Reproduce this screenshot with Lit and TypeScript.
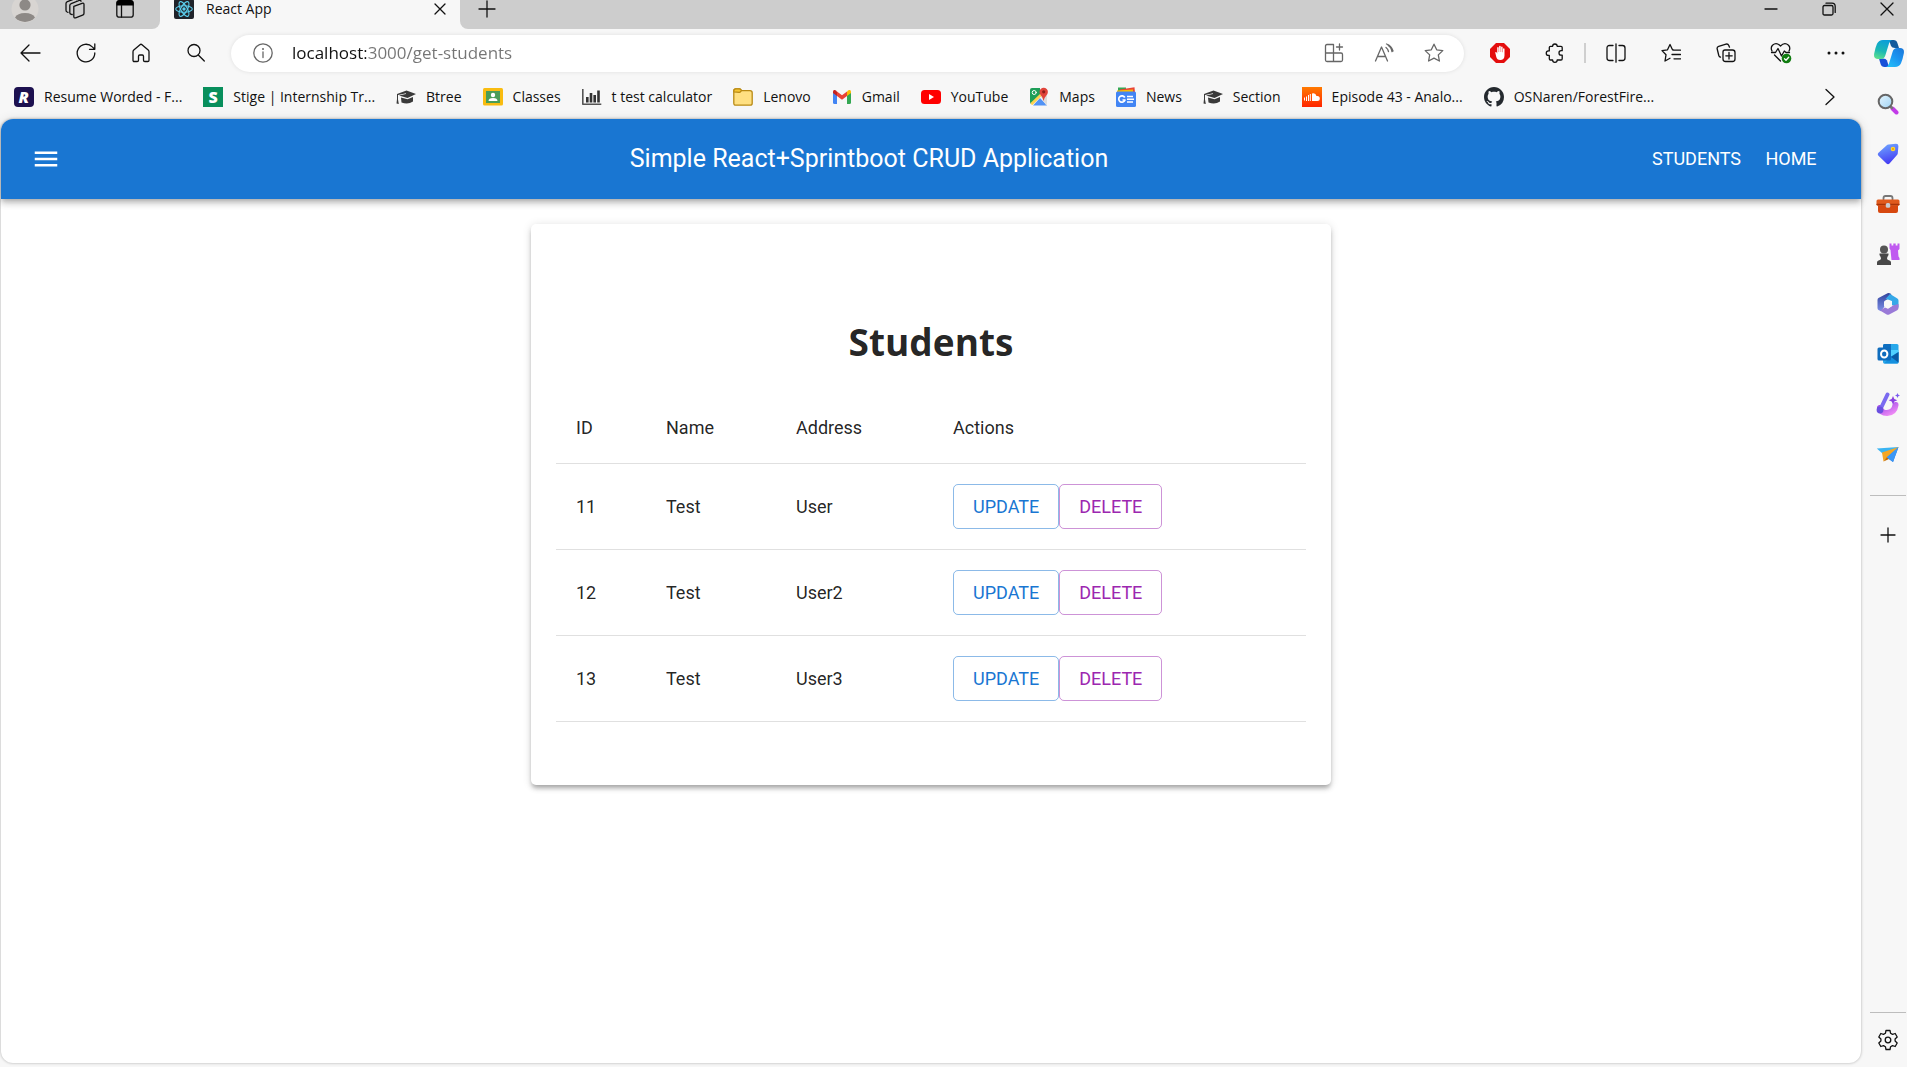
import { LitElement, html, svg, css, type TemplateResult } from "lit";
import { customElement, state } from "lit/decorators.js";

const icon = (w: number, h: number, body: TemplateResult) => html`<svg
  width=${w} height=${h} viewBox="0 0 ${w} ${h}" aria-hidden="true"
  fill="none" stroke-width="1.3" stroke-linecap="round" stroke-linejoin="round">${body}</svg>`;

const line = (d: string, w = 20, h = 20) => icon(w, h, svg`<path stroke="currentColor" d=${d}/>`);

/* Window chrome */
const avatar = icon(28, 28, svg`
  <circle cx="14" cy="14" r="13.5" fill="#d8d5d2"/>
  <circle cx="14" cy="10" r="5.6" fill="#8d8986"/>
  <path d="M4 22.500a10.500 6.500 0 0 1 20 0a13.500 13.500 0 0 1-20 0z" fill="#8d8986"/>`);
const workspaces = line("M9.800 8.300 18 5.300q2-.7 2 1.300v8.600q0 1.500-1.400 2l-7 2.600q-1.800.6-1.800-1.200zM8.200 16.500l-1-.2q-1.400-.4-1.400-1.600V7.600q0-1.500 1.400-2l8-3.100q1.500-.5 1.900.7M4 14.300l-.8-.3Q2 13.500 2 12.300V5.600q0-1.500 1.400-2L10.500.9q1.500-.5 2 .7", 22, 22);
const tabActions = icon(20, 20, svg`
  <rect x="1.800" y="1.800" width="16.400" height="16.400" rx="2.500" stroke="#111"/>
  <path d="M1.500 6.500V4a3 3 0 0 1 3-3h11a3 3 0 0 1 3 3v2.500z" fill="#000"/>
  <path d="M6.500 6.500V18" stroke="#111"/>`);
const reactLogo = icon(20, 20, svg`
  <rect width="20" height="20" rx="2" fill="#20232a"/>
  <g stroke="#5ccfee" stroke-width="1.100">
    <ellipse cx="10" cy="10" rx="8.300" ry="3.200"/>
    <ellipse cx="10" cy="10" rx="8.300" ry="3.200" transform="rotate(60 10 10)"/>
    <ellipse cx="10" cy="10" rx="8.300" ry="3.200" transform="rotate(120 10 10)"/>
  </g><circle cx="10" cy="10" r="1.700" fill="#5ccfee"/>`);
const closeTab = line("M1 1l10 10M11 1L1 11", 12, 12);
const plus = line("M9 1v16M1 9h16", 18, 18);
const minimize = line("M1 7h12", 14, 14);
const restore = line("M3 3.500h6.500q1.500 0 1.500 1.500v6.500q0 1.500-1.500 1.500H2.500Q1 13 1 11.500V5q0-1.500 1.500-1.500M4 1.200h6q3.200 0 3.200 3.200v6", 14, 14);
const closeWindow = line("M1 1l12 12M13 1L1 13", 14, 14);

/* Toolbar */
const back = line("M20 10H1M9 2L1 10l8 8", 21, 20);
const reload = line("M18.800 10A8.800 8.800 0 1 1 16.300 3.900L18.500 6M18.800 1v5.300h-5.300", 20, 20);
const home = line("M2 8.800q0-1 .8-1.700L9 1.700q1-.9 2 0l6.200 5.400q.8.7.8 1.700v8.400q0 1.300-1.300 1.300h-2.900q-1.300 0-1.300-1.300v-4q0-1.200-1.200-1.200H8.700q-1.200 0-1.200 1.200v4q0 1.300-1.300 1.300H3.300Q2 18.500 2 17.200z");
const search = line("M14 7.500a6 6 0 1 1-12 0a6 6 0 0 1 12 0M12.300 12l6 6");
const info = icon(20, 20, svg`<circle cx="10" cy="10" r="9.200" stroke="#666"/><path d="M10 9v5.500" stroke="#666"/><circle cx="10" cy="6" r="1" fill="#666"/>`);
const appAdd = line("M9.500 1.500H3q-1.500 0-1.500 1.500v14q0 1.500 1.500 1.500h14q1.500 0 1.500-1.500v-5.500q0-1.500-1.500-1.500H1.500M9.500 1.500v17M15.500 1v6M12.500 4h6");
const readAloud = line("M1.500 18L7.500 4l6 14M3.500 13.500h8M12 4.500q2 1.500 2.500 4M14 2.200q3.500 2.200 4 6.500M12.500 1q5 1.500 6.500 7");
const star = line("M10 1.200l2.700 5.600 6.100.8-4.500 4.300 1.100 6.100L10 15.100 4.600 18l1.100-6.100L1.200 7.600l6.100-.8z");
const adblock = icon(20, 20, svg`
  <path d="M6 0h8l6 6v8l-6 6H6l-6-6V6z" fill="#e40d0d"/>
  <path d="M5.200 9.500c0-.7 1.300-.7 1.500 0l.5 1.200V4.800c0-1 1.500-1 1.500 0V9h.4V3.500c0-1 1.600-1 1.600 0V9h.4V4.200c0-1 1.500-1 1.500 0v5h.4V6c0-1 1.500-1 1.500 0v6.500c0 3-1.700 4.500-4.200 4.500-2.600 0-3.400-1.300-4-3z" fill="#fff"/>`);
const puzzle = line("M5.500 3.300H7.600a2.300 2.300 0 0 1 4.600 0H16q1.200 0 1.200 1.200v3.200h-1a2.200 2.200 0 0 0 0 4.400h1v3.700q0 1.200-1.200 1.200h-3.800a2.300 2.300 0 0 1-4.600 0H5.500q-1.200 0-1.200-1.200v-3.400h-.8a2.200 2.200 0 0 1 0-4.500h.8V4.500q0-1.200 1.200-1.200z");
const split = line("M10 .8v18.400M7 2.500H3.500Q1 2.500 1 5v10q0 2.500 2.500 2.500H7M13 2.500h3.500Q19 2.500 19 5v10q0 2.500-2.500 2.500H13");
const favorites = line("M12.500 7l-1-.2L9 1.500 6.500 6.800 1 7.600l4 4.200-1 6.200 5-2.800M12 7.200h7.500M11 11.500h8.500M13 15.800h6.500");
const collections = line("M9 7h7.500q2.500 0 2.500 2.500V16q0 2.500-2.500 2.500H9.500Q7 18.500 7 16V9q0-2 2-2zM13 9.500v6.500M9.800 12.800h6.400M4.500 14.200q-1.300-.3-1.700-1.700L1.200 6Q.7 4 2.700 3.300L10 1.100q2-.5 2.800 1.300l.7 1.800");
const health = icon(22, 22, svg`
  <path stroke="#111" d="M2 9Q.3 5.500 2.500 3.200 6.500-.2 10.500 4 14.500-.2 18.500 3.200 20.800 5.500 19 9M1.500 10.500h4L8 6.500l3.500 7.500 2.800-5 1.700 1.500h3.500M4.500 13l6 6"/>
  <circle cx="16.500" cy="16.500" r="4.800" fill="#107c10"/><path stroke="#fff" d="M14.500 16.700l1.500 1.500 2.700-3"/>`);
const dots = icon(20, 20, svg`<g fill="#111"><circle cx="3" cy="10" r="1.500"/><circle cx="10" cy="10" r="1.500"/><circle cx="17" cy="10" r="1.500"/></g>`);
const copilot = icon(30, 27, svg`
  <defs>
    <linearGradient id="cpA" x1=".5" y1="0" x2=".2" y2="1"><stop stop-color="#0a9fd8"/><stop offset=".55" stop-color="#1bb8b4"/><stop offset="1" stop-color="#5fe08c"/></linearGradient>
    <linearGradient id="cpB" x1="1" y1="0" x2=".2" y2="1"><stop stop-color="#1a76d8"/><stop offset=".5" stop-color="#1c93f0"/><stop offset="1" stop-color="#23bdf8"/></linearGradient>
  </defs>
  <path d="M15 0h4.500q3 0 4 3.200L25 8h-4q-3 0-4-2z" fill="#125a9c"/>
  <path d="M15 27h-4.500q-3 0-4-3.200L5 18.500h4q3 0 4 2z" fill="#1750d8"/>
  <path d="M9 0h9q-2.200.8-3 3.500L11.300 15.500Q10.200 19 7 19H4Q-.8 19 .2 13.500 1.200 8 3 3.800 4.800 0 9 0z" fill="url(#cpA)"/>
  <path d="M21 27h-9q2.200-.8 3-3.500l3.700-12Q19.800 8 23 8h3q4.800 0 3.800 5.500-1 5.500-2.800 9.700Q25.200 27 21 27z" fill="url(#cpB)"/>`);
const chevron = line("M5 2.500l8 7.500-8 7.500", 18, 20);

/* Bookmark favicons */
const gradCap = icon(20, 20, svg`
  <path d="M10.500 3.500L20 7l-8.500 4L3 8.500l7-1.600v-.7L2 8v4.500l.8 4.500-2.300-.5L1 12V7z" fill="#3a3a3a"/>
  <path d="M5 10.500l6.500 1.800L17 10v4.500q-5 3.500-11.500 1z" fill="#3a3a3a"/>`);
const fav = {
  resume: icon(20, 20, svg`<rect width="20" height="20" rx="4" fill="#1d1150"/><text x="9.800" y="15.800" text-anchor="middle" fill="#fff" font-family="Open Sans, sans-serif" font-size="16" font-weight="800" font-style="italic">R</text>`),
  stige: icon(20, 20, svg`<rect width="20" height="20" fill="#088f5c"/><text x="10" y="16" text-anchor="middle" fill="#fff" font-family="Open Sans, sans-serif" font-size="16" font-weight="800">S</text>`),
  cap: gradCap,
  classes: icon(20, 20, svg`<rect y="1" width="20" height="17.500" rx="1.500" fill="#f9bc10"/><rect x="3" y="4" width="14" height="12" fill="#4a9d57"/><circle cx="10" cy="8" r="2.200" fill="#fff"/><path d="M5.500 14q0-3 4.500-3t4.500 3z" fill="#fff"/>`),
  chart: icon(20, 20, svg`<path d="M.8 2v15.300h18.500" stroke="#555" stroke-linecap="butt" stroke-width="1.600"/><path d="M5.300 15.500V10M9 15.500V6M12.700 15.500V8M16.500 15.500V3.500" stroke="#333" stroke-width="2.600" stroke-linecap="butt"/>`),
  folder: icon(20, 20, svg`<path d="M.8 4q0-2.200 2-2.200h3.500q1 0 1.500.8l.8 1H17q2.200 0 2.200 2.200v10.400q0 2-2 2H2.800q-2 0-2-2z" fill="#ffe082" stroke="#b98a14"/><path d="M.8 4.800V4q0-2.200 2-2.200h3.500q1 0 1.600.9l.5.900-.6.800q-.6.900-1.600.900z" fill="#f7c531" stroke="#b98a14"/>`),
  gmail: icon(20, 20, svg`<path d="M1 5v10.500q0 1.500 1.500 1.500H5V8z" fill="#4285f4"/><path d="M19 5v10.500q0 1.500-1.500 1.500H15V8z" fill="#34a853"/><path d="M15 4.500V9l4-3V4.800q0-1.500-1.300-1.800-1-.2-1.700.5z" fill="#fbbc04"/><path d="M5 9l5 3.800L15 9V4.500L10 8.200 5 4.500z" fill="#ea4335"/><path d="M1 4.800V6l4 3V4.500L4 3.500Q3.300 2.800 2.300 3 1 3.300 1 4.800z" fill="#c5221f"/>`),
  youtube: icon(20, 20, svg`<rect y="3" width="20" height="14" rx="3.500" fill="#f00"/><path d="M8 7v6l5-3z" fill="#fff"/>`),
  maps: icon(20, 20, svg`<path d="M1 3q0-2 2-2h8v7L2 17q-1-1-1-2z" fill="#1e9e58"/><path d="M4 18.500L11 11l7 7.500z" fill="#5293f5"/><path d="M1.500 16L11 7l1.500 2L3.500 18q-1.500 0-2-2z" fill="#fdd34f"/><path d="M12 10l6-2v8q0 1.500-1 2z" fill="#ddd"/><circle cx="5.200" cy="5.500" r="2" stroke="#fff" stroke-width="1"/><path d="M14.500 14q-.3-3-2.200-5-1.800-2-1.800-4a4.200 4.200 0 0 1 8.400 0q0 2-1.900 4-2 2-2.500 5z" fill="#e0443a"/><circle cx="14.700" cy="4.800" r="1.600" fill="#8c1d18"/>`),
  news: icon(20, 20, svg`<path d="M2 .5h8V6H2z" fill="#34a853"/><path d="M4 2.500L18.500.3 19 6H4z" fill="#ea4335"/><path d="M1 3.500l16-1V7H1z" fill="#fbbc04"/><rect y="4.500" width="20" height="15.500" rx="1.500" fill="#4285f4"/><path d="M8.800 10.500a3.200 3.200 0 1 0 .2 2.500H6.500" stroke="#fff" stroke-width="1.700" stroke-linecap="butt"/><path d="M11 9.500h6M11 12.200h7M11 15h6" stroke="#fff" stroke-width="1.500" stroke-linecap="butt"/>`),
  soundcloud: icon(20, 20, svg`<defs><linearGradient id="sc" x1="0" y1="0" x2="0" y2="1"><stop stop-color="#ff7a00"/><stop offset="1" stop-color="#ff2400"/></linearGradient></defs><rect width="20" height="20" fill="url(#sc)"/><path d="M10 6.500q3.500-1.200 4.500 2.500 3.300-.5 3.300 2.500 0 2.500-2.500 2.500H10z" fill="#fff"/><path d="M2.500 13.500v-3M4.500 14v-4.500M6.500 14V8M8.300 14V7" stroke="#fff" stroke-width="1" stroke-linecap="butt"/>`),
  github: html`<svg width="20" height="20" viewBox="0 0 16 16" aria-hidden="true" fill="#24292e"><path d="M8 0C3.580 0 0 3.580 0 8c0 3.540 2.290 6.530 5.470 7.590.4.070.55-.17.55-.38 0-.19-.01-.82-.01-1.490-2.010.37-2.530-.49-2.690-.94-.09-.23-.48-.94-.82-1.130-.28-.15-.68-.52-.01-.53.63-.01 1.080.58 1.230.82.72 1.210 1.870.87 2.330.66.07-.52.28-.87.51-1.070-1.780-.2-3.640-.89-3.640-3.950 0-.87.31-1.590.82-2.150-.08-.2-.36-1.020.08-2.120 0 0 .67-.21 2.200.82.64-.18 1.320-.27 2-.27s1.360.09 2 .27c1.530-1.040 2.200-.82 2.200-.82.44 1.100.16 1.920.08 2.120.51.56.82 1.270.82 2.150 0 3.070-1.870 3.750-3.650 3.950.29.25.54.73.54 1.480 0 1.070-.01 1.930-.01 2.200 0 .21.15.46.55.38A8.010 8.010 0 0 0 16 8c0-4.420-3.580-8-8-8z"/></svg>`,
};

/* Sidebar */
const sidebarApps: [string, TemplateResult][] = [
  ["Search", icon(22, 22, svg`<defs><linearGradient id="mg" x1="0" y1="0" x2="1" y2="1"><stop stop-color="#e6f6ff"/><stop offset="1" stop-color="#9fd3f3"/></linearGradient></defs><path d="M15.500 15.500l4 4" stroke="#c23be8" stroke-width="4"/><path d="M13 13l2 2" stroke="#777" stroke-width="2.500"/><circle cx="8.500" cy="8.500" r="6.800" fill="url(#mg)" stroke="#666" stroke-width="2"/>`)],
  ["Shopping", icon(22, 22, svg`<defs><linearGradient id="tg" x1=".3" y1="0" x2=".6" y2="1"><stop stop-color="#6ea4ff"/><stop offset="1" stop-color="#4236f2"/></linearGradient></defs><path d="M11.500 1.500l7.500-.7q2.500 0 2.400 2.500l-.6 7q-.1 1-.8 1.800l-7.500 8.500q-1.500 1.500-3 0l-8-7.800q-1.400-1.500 0-3l8-7.300q.8-.9 2-1z" fill="url(#tg)"/><circle cx="16" cy="6" r="2.300" fill="#ffd62e"/><circle cx="16" cy="6" r="1" fill="#e8a100"/>`)],
  ["Tools", icon(24, 20, svg`<path d="M7.500 5.500V4q0-2 2-2h5q2 0 2 2v1.500" stroke="#777" stroke-width="1.800"/><path d="M2 11h20v6q0 2-2 2H4q-2 0-2-2z" fill="#d7480f"/><path d="M.5 7q0-1.500 1.500-1.500h20q1.500 0 1.500 1.500v3q0 2-2 2h-19q-2 0-2-2z" fill="#e05a1c"/><path d="M1 10.500h22" stroke="#a83408"/><rect x="9.800" y="9" width="4.400" height="4.800" rx="1.500" fill="#c9ccd0"/>`)],
  ["Games", icon(24, 24, svg`<path d="M13.500 1.500h2v2h1.800v-2h2.400v2h1.800v-2h2V7l-1.500 1.500.5 6 1 1.500v2h-8l-1-10-1-1.500z" fill="#c05af0"/><circle cx="8" cy="7.500" r="4" fill="#555"/><path d="M3.500 11.500h9V13q-1.500 2-1.500 3.500t2.500 2q1.500.5 1.500 2V23H1v-2.500q0-1.500 1.500-2Q5 18 5 16.500T3.500 13z" fill="#484848"/>`)],
  ["Microsoft 365", icon(22, 22, svg`<defs><linearGradient id="m3" x1="0" y1="0" x2="0" y2="1"><stop stop-color="#30439c"/><stop offset="1" stop-color="#7f8fe8"/></linearGradient></defs><path d="M10.500.3L1.500 5Q.5 5.500.5 7v8q0 1.500 1 2l2.500 1.300 3.500-4.800V8l8-4.500L13.500.6q-1.500-.9-3-.3z" fill="url(#m3)"/><path d="M13 1l7 4.200q1.500.9 1.500 2.300v7L15 12V8L8.500 6z" fill="#35a8e8"/><path d="M21.500 11v4q0 1.500-1.300 2.300l-8 4.200q-1.200.5-2.500 0L3 17.500l5-3 3 1.200 4-3z" fill="#9a7ad8"/><path d="M11 6.500l4 2.300v4.400l-4 2.300-4-2.300V8.800z" fill="#f7f7f7"/>`)],
  ["Outlook", icon(22, 22, svg`<rect x="6" y="1" width="15.500" height="19.500" rx="1.500" fill="#28a8ea"/><path d="M6 2.500Q6 1 7.500 1H14v6H6z" fill="#0f6fc0"/><path d="M14 7h7.500v6H14z" fill="#50d0ff"/><path d="M21.500 9v10q0 1.500-1.500 1.500H7l7-7z" fill="#1490df"/><path d="M21.500 9v10.500L14 14z" fill="#0a5aa4"/><rect x=".5" y="4.500" width="13.500" height="13" rx="1.500" fill="#0f6cbd"/><ellipse cx="7.200" cy="11" rx="3.200" ry="3.500" stroke="#fff" stroke-width="2"/>`)],
  ["Designer", icon(24, 24, svg`<defs><linearGradient id="ds" x1="0" y1="0" x2="1" y2="1"><stop stop-color="#a24be8"/><stop offset="1" stop-color="#f08cf5"/></linearGradient></defs><path d="M4 16q1 5 7 5 7.500-.5 8.500-8" stroke="url(#ds)" stroke-width="6"/><path d="M11.500 2.500L5 16" stroke="#7a6af0" stroke-width="4"/><circle cx="4" cy="18" r="3.400" fill="#6a4fe0"/><path d="M17 4l1.300 3 3 1.200-3 1.300L17 12.500l-1.300-3-3-1.300 3-1.200z" fill="#8a3fe0"/><path d="M21.500 1l.8 1.800 1.700.7-1.700.8-.8 1.700-.8-1.700L19 3.500l1.700-.7z" fill="#7b5cf0"/>`)],
  ["Drop", icon(24, 20, svg`<path d="M.8 4.500L22.500 3l-12 10z" fill="#3ab4f2"/><path d="M22.500 3L17 18l-6.500-4.800z" fill="#1b6fe0"/><path d="M22.500 3L6 8.500l1.500 9 4-4.500z" fill="#f5a623"/><path d="M7.500 17.500L11 13l2 2z" fill="#c46a00"/><path d="M22.500 3L10.800 13.300 17 18z" fill="#3b97f5"/>`)],
];
const gear = line("M9 1.500h4l.6 2.800 1.900 1.100 2.700-.9 2 3.500-2.100 1.900v2.200l2.100 1.900-2 3.500-2.700-.9-1.900 1.100-.6 2.800H9l-.6-2.800-1.900-1.100-2.700.9-2-3.500 2.100-1.900V9.900L1.800 8l2-3.500 2.700.9 1.900-1.100zM13.800 11a2.800 2.800 0 1 1-5.600 0a2.800 2.800 0 0 1 5.600 0", 22, 22);
const addApp = line("M8 1v14M1 8h14", 16, 16);
const menu = html`<svg width="30" height="30" viewBox="0 0 24 24" aria-hidden="true" fill="currentColor"><path d="M3 18h18v-2H3v2zm0-5h18v-2H3v2zm0-7v2h18V6H3z"/></svg>`;

const bookmarks: [string, TemplateResult][] = [
  ["Resume Worded - F...", fav.resume],
  ["Stige | Internship Tr...", fav.stige],
  ["Btree", fav.cap],
  ["Classes", fav.classes],
  ["t test calculator", fav.chart],
  ["Lenovo", fav.folder],
  ["Gmail", fav.gmail],
  ["YouTube", fav.youtube],
  ["Maps", fav.maps],
  ["News", fav.news],
  ["Section", fav.cap],
  ["Episode 43 - Analo...", fav.soundcloud],
  ["OSNaren/ForestFire...", fav.github],
];

interface Student { id: number; name: string; address: string }

const reset = css`
  * { box-sizing: border-box; }
  button { font: inherit; color: inherit; background: none; border: 0; padding: 0; margin: 0; cursor: pointer; }
  a { color: inherit; text-decoration: none; }
  svg { display: block; flex: none; }
`;

@customElement("app-bar")
class AppBar extends LitElement {
  static styles = [reset, css`
    :host { display: block; font-family: Roboto, "Liberation Sans", sans-serif; }
    .bar {
      display: flex; align-items: center; height: 80px; padding: 0 30px;
      background: #1976d2; color: #fff; border-radius: 12px 12px 0 0;
      box-shadow: 0 2px 5px -1px rgba(0,0,0,.2), 0 5px 6px rgba(0,0,0,.14), 0 1px 12px rgba(0,0,0,.12);
    }
    .menu { margin-right: 35px; }
    .title { flex: 1; margin: 0; text-align: center; font-size: 25px; line-height: 40px; font-weight: 400; }
    .link { min-width: 80px; padding: 0 10px; text-align: center; font-size: 18px; line-height: 30px; text-transform: uppercase; }
  `];
  render() {
    return html`<header class="bar">
      <button class="menu" aria-label="menu">${menu}</button>
      <h1 class="title">Simple React+Sprintboot CRUD Application</h1>
      <a class="link" href="/get-students">Students</a>
      <a class="link" href="/">Home</a>
    </header>`;
  }
}

@customElement("student-list")
class StudentList extends LitElement {
  @state() private students: Student[] = [
    { id: 11, name: "Test", address: "User" },
    { id: 12, name: "Test", address: "User2" },
    { id: 13, name: "Test", address: "User3" },
  ];
  static styles = [reset, css`
    :host { display: block; font-family: Roboto, "Liberation Sans", sans-serif; color: rgba(0,0,0,.87); }
    .card {
      max-width: 800px; margin: 25px auto; padding: 63px 25px; border-radius: 5px; background: #fff;
      box-shadow: 0 4px 4px -2px rgba(0,0,0,.2), 0 4px 5px rgba(0,0,0,.14), 0 1px 10px rgba(0,0,0,.12);
    }
    .title { margin: 28px 0 25px; text-align: center; font: 700 37px/53px "Open Sans", "Noto Sans", sans-serif; }
    .table { width: 100%; border-collapse: separate; border-spacing: 0; table-layout: fixed; font-size: 18px; line-height: 30px; }
    .id { width: 12%; }
    .name { width: 130px; }
    .address { width: 157px; }
    .cell { padding: 20px; text-align: left; font-weight: 400; border-bottom: 1px solid #e0e0e0; }
    .actions { display: flex; }
    .button { padding: 6px 19px; border: 1px solid; border-radius: 5px; line-height: 31px; text-transform: uppercase; }
    .update { color: #1976d2; border-color: rgba(25,118,210,.5); }
    .delete { color: #9c27b0; border-color: rgba(156,39,176,.5); }
  `];
  render() {
    return html`<section class="card">
      <h2 class="title">Students</h2>
      <table class="table">
        <thead><tr>
          <th class="cell id" scope="col">ID</th>
          <th class="cell name" scope="col">Name</th>
          <th class="cell address" scope="col">Address</th>
          <th class="cell" scope="col">Actions</th>
        </tr></thead>
        <tbody>${this.students.map((s) => html`<tr>
          <td class="cell">${s.id}</td>
          <td class="cell">${s.name}</td>
          <td class="cell">${s.address}</td>
          <td class="cell"><div class="actions">
            <button class="button update">Update</button>
            <button class="button delete" @click=${() => this.remove(s.id)}>Delete</button>
          </div></td>
        </tr>`)}</tbody>
      </table>
    </section>`;
  }
  private remove(id: number) {
    this.students = this.students.filter((s) => s.id !== id);
  }
}

@customElement("app-root")
class AppRoot extends LitElement {
  static styles = [reset, css`
    :host {
      display: flex; flex-direction: column; min-height: 100vh; background: #f7f7f7; color: #111;
      font: 14px/20px "Open Sans", "Noto Sans", sans-serif; overflow: hidden;
    }
    .strip { display: flex; height: 29px; overflow: hidden; }
    .strip-left, .strip-right { display: flex; align-items: flex-end; background: #cdcdcd; }
    .strip-left { width: 160px; border-radius: 0 0 8px 0; }
    .strip-right { flex: 1; border-radius: 0 0 0 8px; justify-content: space-between; }
    .slot { display: grid; place-items: center; height: 40px; flex: none; }
    .pinned { width: 50px; }
    .tab { display: flex; align-items: flex-end; width: 300px; padding: 0 14px; }
    .tab-label { display: flex; align-items: center; gap: 12px; height: 40px; flex: 1; }
    .new-tab { width: 54px; }
    .window { display: flex; margin-right: -9px; }
    .window-button { width: 58px; }

    .toolbar { display: flex; align-items: center; height: 48px; padding-left: 3px; }
    .tool { display: grid; place-items: center; width: 55px; height: 37px; flex: none; }
    .omnibox {
      display: flex; align-items: center; flex: 1; height: 37px; margin: 0 8px; padding: 0 5px 0 22px;
      background: #fff; border-radius: 19px; box-shadow: 0 0 4px rgba(0,0,0,.1); color: #666;
    }
    .url {
      flex: 1; min-width: 0; margin-left: 19px; padding: 0; border: 0; outline: 0;
      font: 400 17px/24px "Open Sans", "Noto Sans", sans-serif; color: transparent;
      background: linear-gradient(to right, #111 74px, #757575 74px); background-clip: text; -webkit-background-clip: text;
    }
    .in-bar { width: 50px; }
    .divider { width: 2px; height: 20px; margin: 0 2px; background: #cfcfcf; }
    .copilot { width: 36px; margin-left: 8px; }

    .body { display: flex; flex: 1; }
    .main { display: flex; flex-direction: column; flex: 1; min-width: 0; padding: 0 0 4px 1px; }
    .bookmarks { display: flex; align-items: center; gap: 21px; padding: 10px 22px 12px 13px; }
    .bookmark { display: flex; align-items: center; gap: 10px; white-space: nowrap; }
    .more { margin-left: auto; }
    .page { flex: 1; background: #fff; border-radius: 12px; box-shadow: 0 0 3px rgba(0,0,0,.3); }

    .sidebar { display: flex; flex-direction: column; align-items: center; width: 46px; padding: 2px 1px 1px 9px; }
    .app { display: grid; place-items: center; width: 36px; height: 50px; flex: none; }
    .rule { width: 100%; height: 1px; margin: 16px 0 14px; background: #bdbdbd; border: 0; }
    .settings { margin-top: auto; width: 100%; border-top: 1px solid #bdbdbd; height: 54px; }
  `];

  render() {
    return html`
      <div class="strip">
        <div class="strip-left">
          <button class="slot pinned" aria-label="Profile">${avatar}</button>
          <button class="slot pinned" aria-label="Workspaces">${workspaces}</button>
          <button class="slot pinned" aria-label="Tab actions">${tabActions}</button>
        </div>
        <div class="tab">
          <div class="tab-label">${reactLogo}<span>React App</span></div>
          <button class="slot" aria-label="Close tab">${closeTab}</button>
        </div>
        <div class="strip-right">
          <button class="slot new-tab" aria-label="New tab">${plus}</button>
          <div class="window">
            <button class="slot window-button" aria-label="Minimize">${minimize}</button>
            <button class="slot window-button" aria-label="Restore">${restore}</button>
            <button class="slot window-button" aria-label="Close">${closeWindow}</button>
          </div>
        </div>
      </div>
      <nav class="toolbar">
        <button class="tool" aria-label="Back">${back}</button>
        <button class="tool" aria-label="Refresh">${reload}</button>
        <button class="tool" aria-label="Home">${home}</button>
        <button class="tool" aria-label="Search">${search}</button>
        <div class="omnibox">
          ${info}
          <input class="url" type="text" aria-label="Address" .value=${"localhost:3000/get-students"}>
          <button class="tool in-bar" aria-label="Install app">${appAdd}</button>
          <button class="tool in-bar" aria-label="Read aloud">${readAloud}</button>
          <button class="tool in-bar" aria-label="Add to favorites">${star}</button>
        </div>
        <button class="tool" aria-label="Ad blocker">${adblock}</button>
        <button class="tool" aria-label="Extensions">${puzzle}</button>
        <span class="divider"></span>
        <button class="tool" aria-label="Split screen">${split}</button>
        <button class="tool" aria-label="Favorites">${favorites}</button>
        <button class="tool" aria-label="Collections">${collections}</button>
        <button class="tool" aria-label="Browser essentials">${health}</button>
        <button class="tool" aria-label="Settings and more">${dots}</button>
        <button class="tool copilot" aria-label="Copilot">${copilot}</button>
      </nav>
      <div class="body">
        <div class="main">
          <div class="bookmarks">
            ${bookmarks.map(([label, mark]) => html`<a class="bookmark" href="#">${mark}<span>${label}</span></a>`)}
            <button class="more" aria-label="More bookmarks">${chevron}</button>
          </div>
          <main class="page">
            <app-bar></app-bar>
            <student-list></student-list>
          </main>
        </div>
        <aside class="sidebar">
          ${sidebarApps.map(([label, mark]) => html`<button class="app" aria-label=${label}>${mark}</button>`)}
          <hr class="rule">
          <button class="app" aria-label="Customize">${addApp}</button>
          <button class="app settings" aria-label="Settings">${gear}</button>
        </aside>
      </div>`;
  }
}
